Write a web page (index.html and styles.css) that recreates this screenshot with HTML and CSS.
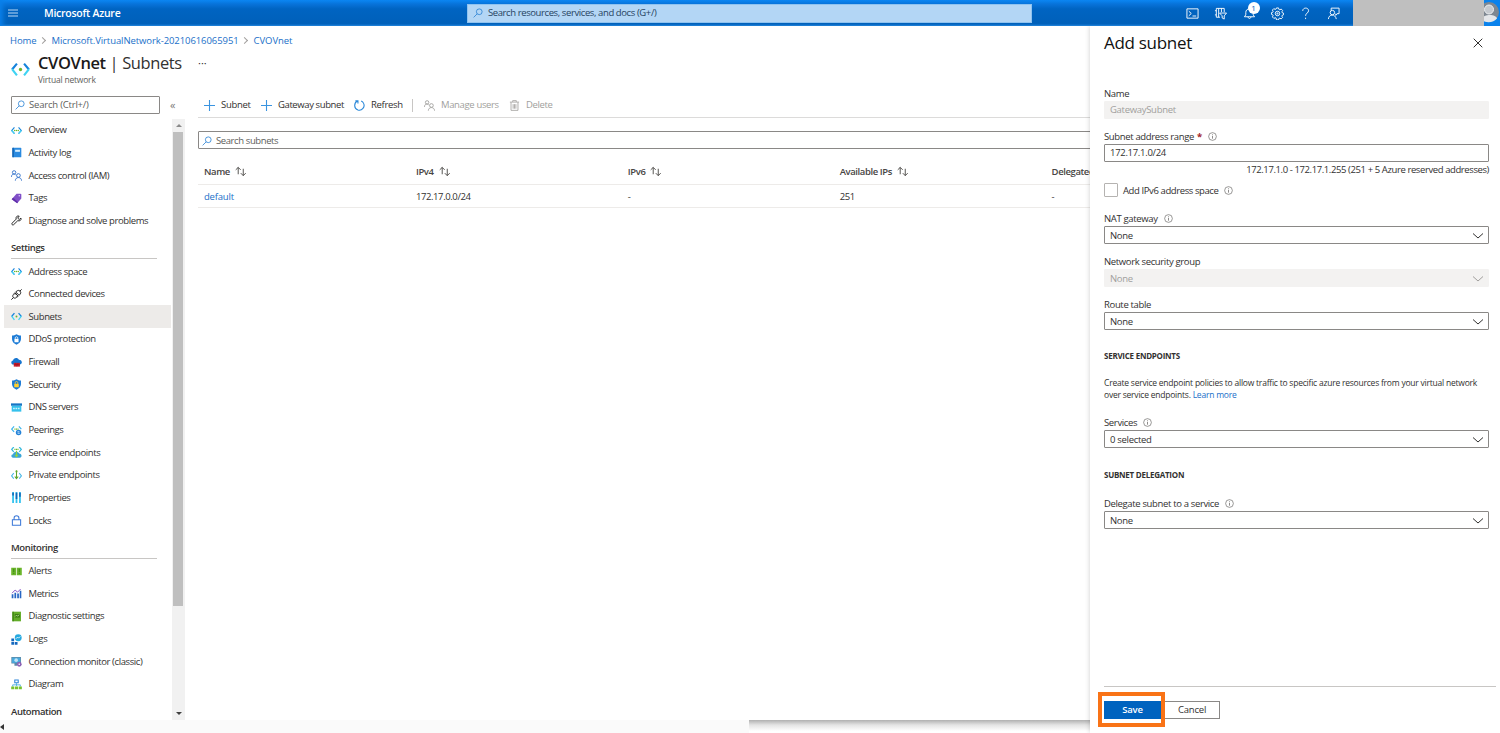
FILE: index.html
```
<!DOCTYPE html>
<html lang="en">
<head>
  <title>CVOVnet | Subnets - Microsoft Azure</title>
  <meta charset="utf-8">
  <meta name="viewport" content="width=device-width, initial-scale=1">
  <link rel="stylesheet" href="styles.css">
</head>
<body>
  <!-- shared icons -->
  <svg class="defs" width="0" height="0">
    <symbol id="vnet" viewBox="0 0 16 16">
      <path d="M5 3.5 1 8l4 4.5" fill="none" stroke="#1b87dd" stroke-width="1.7"/>
      <path d="M11 3.5 15 8l-4 4.5" fill="none" stroke="#1b87dd" stroke-width="1.7"/>
      <path d="M1 8l4 4.5M15 8l-4 4.5" fill="none" stroke="#3fd3f2" stroke-width="1.7"/>
      <g fill="#6cb52d"><circle cx="5.4" cy="8" r="1.1"/><circle cx="8" cy="8" r="1.1"/><circle cx="10.6" cy="8" r="1.1"/></g>
    </symbol>
    <symbol id="subnet" viewBox="0 0 16 16">
      <path d="M5 3 .9 8M11 3l4.1 5" fill="none" stroke="#1583dc" stroke-width="1.8"/>
      <path d="M.9 7.6 5 13M15.1 7.6 11 13" fill="none" stroke="#3fd3f2" stroke-width="1.8"/>
      <circle cx="8" cy="8" r="1.4" fill="#6cb52d"/>
    </symbol>
    <symbol id="search" viewBox="0 0 16 16">
      <g fill="none" stroke="currentColor" stroke-width="1.3"><circle cx="10" cy="6" r="4.6"/><path d="M6.7 9.3 1 15"/></g>
    </symbol>
    <symbol id="people" viewBox="0 0 16 16">
      <g fill="none" stroke="currentColor" stroke-width="1.3"><circle cx="4.5" cy="3.5" r="2.5"/><path d="M.7 10c0-5 5-5 6.3-2.5"/><circle cx="10.8" cy="8" r="2.7"/><path d="M6.3 15.5c0-6 9-6 9 0"/></g>
    </symbol>
    <symbol id="plus" viewBox="0 0 11 11"><path d="M5.500 0v11M0 5.500h11" stroke="#3a94e0" stroke-width="1.100"/></symbol>
    <symbol id="sort" viewBox="0 0 14 12">
      <g fill="none" stroke="#484644" stroke-width="1"><path d="M4.5 9V1.500M1.800 4.200l2.700-2.700 2.700 2.700M10 3v7.500M7.300 7.800l2.700 2.700 2.700-2.700"/></g>
    </symbol>
    <symbol id="info" viewBox="0 0 10 10">
      <circle cx="5" cy="5" r="4.3" fill="none" stroke="#605e5c" stroke-width=".7"/><path d="M5 4.4v3M5 2.6v1" stroke="#605e5c" stroke-width=".8"/>
    </symbol>
    <symbol id="chevron" viewBox="0 0 12 8"><path d="M1 1.500l5 4.500 5-4.500" fill="none" stroke="currentColor" stroke-width="1"/></symbol>
    <symbol id="shield" viewBox="0 0 16 16"><path d="M8 .5c2 1.300 4 1.800 6.500 1.800v5.200c0 4-3.500 6.500-6.500 8-3-1.500-6.500-4-6.500-8V2.300C4 2.300 6 1.800 8 .5z" fill="#1b7bd6"/></symbol>
  </svg>

  <header class="topbar">
    <svg class="burger" viewBox="0 0 10 8"><path d="M0 1h10M0 4h10M0 7h10" stroke="#cfe5fa" stroke-width=".9"/></svg>
    <span class="brand">Microsoft Azure</span>
    <div class="global-search"><svg class="ico-search"><use href="#search"/></svg><span>Search resources, services, and docs (G+/)</span></div>
    <div class="top-icons">
      <svg viewBox="0 0 14 14"><path d="M1 2h12v10H1zM3 4.500 5.700 7 3 9.500M7 9.700h4"/></svg>
      <svg viewBox="0 0 14 14"><path d="M6.500 11H2.500V1.500h8.500v4M5 1.500v9.500M2.500 4h-1.500M2.500 8.500h-1.500M8 1.500v4M6 6.500h7.500L11 9.500v3.500l-2.200-1.200V9.500z"/></svg>
      <span class="bell"><svg viewBox="0 0 14 14"><path d="M1.500 10.500h11L11 8.500V6C11 3.500 9.500 2 7 2S3 3.500 3 6v2.500zM5.500 10.500c0 2.500 3 2.500 3 0"/></svg><b class="badge">1</b></span>
      <svg viewBox="0 0 14 14"><path d="M5.900 1h2.200l.4 1.600 1 .4 1.500-.8 1.500 1.600-.8 1.400.4 1 1.400.4v1.800l-1.400.5-.4 1 .8 1.400-1.600 1.500-1.400-.8-1 .4-.4 1.500H5.900L5.500 11.900l-1-.4-1.400.8-1.600-1.600.8-1.300-.4-1-1.400-.5V6.100l1.400-.4.4-1-.8-1.400L3 1.800l1.500.8 1-.4z"/><circle cx="7" cy="7" r="2.400"/><circle cx="7" cy="7" r=".6"/></svg>
      <svg viewBox="0 0 14 14"><path d="M4 4.200C4 .2 10.300.2 10.300 4c0 2.300-3.200 2.700-3.200 5.500M7.100 11.500v1.500"/></svg>
      <svg viewBox="0 0 14 14"><path d="M4.500 4V1.200h8.500v6h-2.200L9.500 9V7.200"/><circle cx="5.800" cy="6" r="2.400"/><path d="M1.500 13c.3-5.500 7.500-6 8.500 0"/></svg>
    </div>
    <div class="account">
      <svg class="avatar" viewBox="0 0 18 22"><circle cx="7" cy="11" r="10" fill="#7e8791"/><circle cx="7" cy="8.500" r="4.500" fill="#c5c9ce" stroke="#eef0f2"/><path d="M0 19c-1-6 14-7 15-1.500-3 3.500-10 5.500-15 1.500z" fill="#e4e6e9"/></svg>
      <div class="account-cover"></div>
    </div>
  </header>

  <div class="page">
    <main class="blade">
      <nav class="crumbs">
        <a>Home</a><i></i><a>Microsoft.VirtualNetwork-20210616065951</a><i></i><a>CVOVnet</a>
      </nav>
      <div class="blade-head">
        <svg class="head-icon"><use href="#subnet"/></svg>
        <div>
          <h1><b>CVOVnet</b> | <span>Subnets</span></h1>
          <p>Virtual network</p>
        </div>
        <span class="more">···</span>
      </div>

      <div class="columns">
        <aside class="sidebar">
          <div class="side-search">
            <div class="search-box"><svg class="ico-search"><use href="#search"/></svg><span>Search (Ctrl+/)</span></div>
            <span class="collapse">«</span>
          </div>
          <div class="side-scroll">
            <div class="menu">
              <ul>
                <li><svg><use href="#vnet"/></svg>Overview</li>
                <li><svg viewBox="0 0 16 16"><rect x="2" y="1" width="13" height="14" rx="1" fill="#2b8be0"/><path d="M2 1h2v14H2z" fill="#0f5fae"/><path d="M6 4h7v3H6z" fill="#d8efff"/></svg>Activity log</li>
                <li><svg class="blue"><use href="#people"/></svg>Access control (IAM)</li>
                <li><svg viewBox="0 0 16 16"><path d="M8 1h6l1 1v6l-6 7-8-6z" fill="#8150c8"/><path d="M1 9l8 6 1-2-7-6z" fill="#5f2fa8"/><circle cx="12" cy="4" r="1" fill="#e8daff"/></svg>Tags</li>
                <li><svg viewBox="0 0 16 16"><path d="M14.5 4.500 12 6.500 9.700 4.500l2.200-2.800C9 .5 6.500 3 7.500 6L1.500 12c-1 1.500.8 3.300 2.200 2.200L9.800 8.300c3 1 5.700-1 4.700-3.800z" fill="none" stroke="#222" stroke-width="1.4"/></svg>Diagnose and solve problems</li>
              </ul>
              <h2>Settings</h2>
              <ul>
                <li><svg><use href="#vnet"/></svg>Address space</li>
                <li><svg viewBox="0 0 16 16"><g fill="none" stroke="#222" stroke-width="1.400"><path d="M.5 15.500l3-3M12.500 3.500l3-3M5.500 5.500l5 5M5.500 5.500l-2 2.500c-1.500 2-1 3.500 0 4.500s2.800 1.300 4.500-.3l2.500-1.700M6.800 4.200l5 5M6.800 4.200 9 2.700c1.500-1.200 3.200-.7 4.200.3s1.500 2.500.3 4.200l-1.700 2M5.500 8.300l2-2M8 10.800l2-2"/></g></svg>Connected devices</li>
                <li class="active"><svg><use href="#subnet"/></svg>Subnets</li>
                <li><svg viewBox="0 0 16 16"><use href="#shield"/><path d="M5 7h6v5H5z" fill="#fff"/><path d="M6.200 7V5.500c0-2 3.600-2 3.600 0V7" fill="none" stroke="#fff" stroke-width="1.200"/></svg>DDoS protection</li>
                <li><svg viewBox="0 0 16 16"><path d="M3.500 11C-.5 10.500-.5 5.500 3 5c.5-4.500 7-5 8.500-1C16.500 4 17.500 10.500 12.500 11z" fill="#1675d0"/><path d="M4 8.500h9V14H4z" fill="#c8202f"/><path d="M4 11h9M7 8.500V11M10 8.500V11M8.500 11v3" stroke="#8d0d18" stroke-width=".6"/></svg>Firewall</li>
                <li><svg viewBox="0 0 16 16"><use href="#shield"/><path d="M4.700 7h6.600v5H4.700z" fill="#ffd02e"/><path d="M6.200 7V5.300c0-2.200 3.600-2.200 3.600 0V7" fill="none" stroke="#ffd02e" stroke-width="1.300"/></svg>Security</li>
                <li><svg viewBox="0 0 16 16"><path d="M0 2h16v3.500H0z" fill="#1575c5"/><path d="M1 5.500h14v8.500H1z" fill="#35c1ec"/><path d="M3 9.500h10" stroke="#c9f3ff" stroke-width="2" stroke-dasharray="2.500 1"/></svg>DNS servers</li>
                <li><svg viewBox="0 0 16 16"><path d="M4.500 2 1 6l3.500 4M11.500 2 15 6" fill="none" stroke="#3bb4ec" stroke-width="1.700"/><path d="M5 6h6" stroke="#6cb52d" stroke-width="1.800" stroke-dasharray="1.500 .7"/><circle cx="11" cy="11" r="4" fill="#2583d8"/><path d="M9 10h3l-1-1M13 12h-3l1 1" fill="none" stroke="#fff" stroke-width=".8"/></svg>Peerings</li>
                <li><svg viewBox="0 0 16 16"><path d="M4 0 1 3.500l3 3.500M12 0l3 3.500-3 3.500" fill="none" stroke="#34b9dd" stroke-width="1.800"/><path d="M5 3.500h6" stroke="#6cb52d" stroke-width="1.700" stroke-dasharray="1.500 .7"/><path d="M3 15.500c-3.500-.5-3-5 0-5 .5-4.500 7-5 9-1 4 0 4.500 5.500 1 6z" fill="#3aa5d8"/><path d="M8 5.500v8M6 11.500l2 2.500 2-2.500" fill="none" stroke="#8fd13f" stroke-width="1.600"/></svg>Service endpoints</li>
                <li><svg viewBox="0 0 16 16"><path d="M4 4.500.8 8.500l3.200 4M12 4.500l3.200 4-3.200 4" fill="none" stroke="#46b6e6" stroke-width="1.500"/><path d="M8 1v11M5.500 9.500 8 12.500l2.500-3" fill="none" stroke="#5ea52a" stroke-width="1.500"/><circle cx="8" cy="2" r="1.500" fill="#5ea52a"/></svg>Private endpoints</li>
                <li><svg viewBox="0 0 16 16"><path d="M3 0v16M8 0v16M13 0v16" stroke="#32c2ef" stroke-width="2.600"/><path d="M3 1v4M8 1v9M13 1v6" stroke="#1667b8" stroke-width="2.400"/></svg>Properties</li>
                <li><svg viewBox="0 0 16 16"><path d="M2 7h12v8H2zM4.500 7V4.500c0-4.500 7-4.500 7 0V7" fill="none" stroke="#3b78d8" stroke-width="1.500"/></svg>Locks</li>
              </ul>
              <h2>Monitoring</h2>
              <ul>
                <li><svg viewBox="0 0 16 16"><path d="M.3 2.500h7.200v11H.3zM8.500 2.500h7.200v11H8.500z" fill="#6bb52b"/><path d="M4 4v5M12 4v5M4 10.300v1.200M12 10.300v1.200" stroke="#3f8a17" stroke-width="1.600"/></svg>Alerts</li>
                <li><svg viewBox="0 0 16 16"><path d="M1 15V9h2.500v6M5 15V7h2.500v8M9 15V8h2.500v7M12.700 15V4H15v11" fill="#2766c4"/><path d="M1.500 7.500 6 3l3.500 3L14 1.500" fill="none" stroke="#8250c8" stroke-width="1.400"/></svg>Metrics</li>
                <li><svg viewBox="0 0 16 16"><path d="M2 1h12.500v14H2z" fill="#63ad28"/><path d="M2 1h2v14H2z" fill="#3d850f"/><path d="M5.500 4.500H13v5H5.500z" fill="#397c10"/><path d="M6 8l2-2 1.500 1.500L12 5.500" fill="none" stroke="#d8f5b8"/></svg>Diagnostic settings</li>
                <li><svg viewBox="0 0 16 16"><circle cx="10.500" cy="5.500" r="5" fill="#26a9e0"/><path d="M7 7l2.500-2.500 1.500 1.500 2.500-2.500" fill="none" stroke="#fff" stroke-width="1.200"/><path d="M.5 6.500h4v4h-4zM.5 11.500h4v4h-4zM5.500 11.500h4v4h-4z" fill="#1467bd"/></svg>Logs</li>
                <li><svg viewBox="0 0 16 16"><path d="M.5 1.500h14V11H.5zM5 11h4v3H5z" fill="#5d89a8"/><path d="M1.500 2.500h12V10h-12z" fill="#49a9dc"/><circle cx="7.500" cy="6" r="2.600" fill="#bfe3f7"/><circle cx="12" cy="12" r="3.500" fill="#8b62b5"/><circle cx="12" cy="12" r="1.200" fill="#fff"/></svg>Connection monitor (classic)</li>
                <li><svg viewBox="0 0 16 16"><path d="M5.500 1.500h5v4h-5z" fill="#fff" stroke="#2e86d8" stroke-width="1.500"/><path d="M8 6v4M2.500 11V8.500h11V11" fill="none" stroke="#47a8df" stroke-width="1.300"/><path d="M.3 11h4.500v4H.3zM5.800 11h4.500v4H5.800zM11.300 11h4.500v4h-4.500z" fill="#78c22e"/></svg>Diagram</li>
              </ul>
              <h2 class="last">Automation</h2>
            </div>
            <div class="vbar"><i class="up"></i><div class="thumb"></div><i class="down"></i></div>
          </div>
        </aside>

        <section class="content">
          <div class="toolbar">
            <span class="cmd c1"><svg><use href="#plus"/></svg>Subnet</span>
            <span class="cmd c2"><svg><use href="#plus"/></svg>Gateway subnet</span>
            <span class="cmd c3"><svg viewBox="0 0 12 12"><path d="M4 1.200C-.5 3-.2 9.500 4.300 10.900c4.500 1.200 8-3.300 6.200-7.200C9.900 2.300 9 1.500 7.800 1.100M4.300 3.800V1H1.500" fill="none" stroke="#2b88d8" stroke-width="1.200"/></svg>Refresh</span>
            <span class="divider"></span>
            <span class="cmd off c4"><svg><use href="#people"/></svg>Manage users</span>
            <span class="cmd off c5"><svg viewBox="0 0 12 12"><path d="M1 2.300h10M4 2V.7h4V2M2.200 2.500v8.800h7.600V2.500M4.500 4.500v5M6 4.500v5M7.500 4.500v5" fill="none" stroke="currentColor" stroke-width=".9"/></svg>Delete</span>
          </div>
          <div class="search-box wide"><svg class="ico-search"><use href="#search"/></svg><span>Search subnets</span></div>
          <div class="grid-row grid-head">
            <span>Name <svg><use href="#sort"/></svg></span>
            <span>IPv4 <svg><use href="#sort"/></svg></span>
            <span>IPv6 <svg><use href="#sort"/></svg></span>
            <span>Available IPs <svg><use href="#sort"/></svg></span>
            <span>Delegated</span>
          </div>
          <div class="grid-row">
            <span class="name"><a>default</a></span>
            <span>172.17.0.0/24</span>
            <span>-</span>
            <span>251</span>
            <span>-</span>
          </div>
        </section>
      </div>
      <div class="hbar"><i></i><div class="hthumb"></div></div>
    </main>

    <!-- add subnet panel -->
    <aside class="panel">
      <div class="panel-head">
        <h2>Add subnet</h2>
        <svg viewBox="0 0 10 10"><path d="M.7.7l8.600 8.600M9.300.7.7 9.300" stroke="#323130" stroke-width="1"/></svg>
      </div>
      <div class="form">
        <div class="field">
          <label>Name</label>
          <div class="input off">GatewaySubnet</div>
        </div>
        <div class="field range">
          <label>Subnet address range <em>*</em><svg><use href="#info"/></svg></label>
          <div class="input">172.17.1.0/24</div>
          <p class="hint">172.17.1.0 - 172.17.1.255 (251 + 5 Azure reserved addresses)</p>
        </div>
        <div class="check"><span class="box"></span>Add IPv6 address space<svg><use href="#info"/></svg></div>
        <div class="field">
          <label>NAT gateway<svg><use href="#info"/></svg></label>
          <div class="input select">None<svg><use href="#chevron"/></svg></div>
        </div>
        <div class="field">
          <label>Network security group</label>
          <div class="input select off">None<svg><use href="#chevron"/></svg></div>
        </div>
        <div class="field">
          <label>Route table</label>
          <div class="input select">None<svg><use href="#chevron"/></svg></div>
        </div>
        <h3>SERVICE ENDPOINTS</h3>
        <p class="text">Create service endpoint policies to allow traffic to specific azure resources from your virtual network<br>over service endpoints. <a>Learn more</a></p>
        <div class="field">
          <label>Services<svg><use href="#info"/></svg></label>
          <div class="input select">0 selected<svg><use href="#chevron"/></svg></div>
        </div>
        <h3 class="h3-delegation">SUBNET DELEGATION</h3>
        <div class="field">
          <label>Delegate subnet to a service<svg><use href="#info"/></svg></label>
          <div class="input select">None<svg><use href="#chevron"/></svg></div>
        </div>
      </div>
      <footer class="panel-foot">
        <div class="highlight"><button class="save">Save</button></div>
        <button class="cancel">Cancel</button>
      </footer>
    </aside>
  </div>
</body>
</html>
```
FILE: styles.css
```
* {
  box-sizing: border-box;
}
body {
  margin: 0;
  width: 1500px;
  height: 733px;
  overflow: hidden;
  background: #fff;
  color: #323130;
  font-family: "Open Sans", "Noto Sans", sans-serif;
  font-size: 9.5px;
  letter-spacing: -0.4px;
  line-height: 12px;
  white-space: nowrap;
}
h1, h2, h3, p, ul {
  margin: 0;
  padding: 0;
  font-weight: normal;
}
ul {
  list-style: none;
}
svg {
  flex: none;
}
a {
  color: #1a6fc9;
}
.defs {
  position: absolute;
}

/* top bar */
.topbar {
  display: flex;
  align-items: center;
  height: 26px;
  background: linear-gradient(#0c87f4 0, #0873da 4px, #0064c2 9px, #0060b9 24px, #2b86d8 26px);
  box-shadow: inset 5px 0 5px -2px #0a80ea;
  color: #fff;
}
.burger {
  width: 10px;
  height: 8px;
  margin-left: 8px;
}
.brand {
  width: 423px;
  margin-left: 26px;
  font-size: 10.5px;
  font-weight: 600;
  letter-spacing: -0.25px;
}
.global-search {
  display: flex;
  align-items: center;
  width: 565px;
  height: 19px;
  padding-left: 5px;
  background: #b3d6f5;
  border: 1px solid #8fc3f0;
  color: #26435f;
}
.ico-search {
  width: 10px;
  height: 10px;
  margin-right: 5px;
  color: #2b82d4;
}
.top-icons {
  display: flex;
  align-items: center;
  width: 167px;
  margin-left: 154px;
  gap: 15.3px;
}
.top-icons svg {
  display: block;
  width: 13px;
  height: 13px;
  fill: none;
  stroke: #fff;
  stroke-width: 1;
}
.bell {
  position: relative;
}
.badge {
  position: absolute;
  left: 5px;
  top: -5px;
  width: 12px;
  height: 12px;
  border-radius: 6px;
  background: #fff;
  color: #0060b9;
  font-size: 8px;
  font-weight: normal;
  letter-spacing: 0;
  line-height: 12px;
  text-align: center;
}
.account {
  position: relative;
  width: 147px;
  height: 26px;
  background: #0a82ec;
}
.avatar {
  position: absolute;
  right: 0;
  top: 1px;
  width: 18px;
  height: 22px;
}
.account-cover {
  position: absolute;
  left: 0;
  top: 0;
  width: 131px;
  height: 29px;
  background: #bfbfbf;
}

.page {
  display: flex;
  height: 707px;
}
.blade {
  width: 1090px;
  overflow: hidden;
}
.crumbs {
  display: flex;
  align-items: center;
  height: 29px;
  padding-left: 10px;
  letter-spacing: -0.08px;
}
.crumbs i {
  width: 5px;
  height: 5px;
  margin: 0 7px 0 3px;
  border: solid #a19f9d;
  border-width: 1px 1px 0 0;
  transform: rotate(45deg);
}
.blade-head {
  display: flex;
  height: 38px;
  padding-left: 11px;
}
.head-icon {
  width: 19px;
  height: 19px;
  margin: 5px 8px 0 0;
}
.blade-head h1 {
  width: 143px;
  font-size: 16.5px;
  line-height: 15px;
  letter-spacing: -0.4px;
}
.blade-head h1 b {
  font-weight: 600;
  color: #1b1a19;
}
.blade-head p {
  margin-top: 4px;
  font-size: 8.5px;
  letter-spacing: -0.2px;
  color: #605e5c;
}
.more {
  margin: 2px 0 0 17px;
  font-size: 11px;
  letter-spacing: 0;
}
.columns {
  display: flex;
  height: 627px;
}

/* left menu */
.sidebar {
  width: 185px;
}
.side-search {
  display: flex;
  align-items: center;
  height: 26px;
  padding-left: 11px;
}
.search-box {
  display: flex;
  align-items: center;
  width: 149px;
  height: 18px;
  margin-top: -3px;
  padding-left: 3px;
  border: 1px solid #8a8886;
  border-radius: 1px;
  color: #605e5c;
}
.search-box .ico-search {
  margin-right: 4px;
}
.side-search .search-box {
  letter-spacing: -0.2px;
}
.collapse {
  margin: -3px 0 0 10px;
  font-size: 11px;
  color: #797775;
}
.side-scroll {
  display: flex;
  height: 601px;
}
.menu {
  width: 172px;
  overflow: hidden;
}
.menu li {
  display: flex;
  align-items: center;
  height: 22.65px;
  margin: 0 1px 0 4px;
  padding-left: 7px;
}
.menu li svg {
  width: 11px;
  height: 11px;
  margin-right: 6.5px;
}
.menu li.active {
  background: #edebe9;
}
.blue {
  color: #2f6fc9;
}
.menu h2 {
  width: 146px;
  height: 22px;
  margin: 5px 0 1px 11px;
  padding-top: 5px;
  border-bottom: 1px solid #c8c6c4;
  font-size: 9.5px;
  font-weight: 600;
}
.menu h2.last {
  border: 0;
}
.vbar {
  display: flex;
  flex-direction: column;
  align-items: center;
  justify-content: space-between;
  width: 13px;
  background: #f1f1f1;
}
.vbar i {
  margin: 5px 0;
  border: 3px solid transparent;
}
.vbar .up {
  border-top: 0;
  border-bottom-color: #8a8a8a;
}
.vbar .down {
  border-bottom: 0;
  border-top-color: #404040;
}
.thumb {
  width: 10px;
  height: 474px;
  margin: 0 auto auto 1px;
  background: #bfbfbf;
}

/* subnets list */
.content {
  width: 892px;
  margin-left: 13px;
}
.toolbar {
  display: flex;
  align-items: center;
  height: 25px;
  padding-left: 6px;
  border-bottom: 1px solid #dcdbda;
}
.cmd {
  display: flex;
  align-items: center;
}
.cmd svg {
  width: 11px;
  height: 11px;
  margin-right: 6px;
}
.c1 {
  width: 57px;
  letter-spacing: -0.3px;
}
.c2 {
  width: 93px;
}
.c3 {
  width: 58px;
  letter-spacing: -0.3px;
}
.off {
  color: #a19f9d;
}
.divider {
  width: 1px;
  height: 13px;
  margin-right: 11px;
  background: #c8c6c4;
}
.c4 {
  width: 85px;
}
.c4,
.c5 {
  letter-spacing: -0.35px;
}
.wide {
  width: 900px;
  margin-top: 13px;
  padding-top: 1px;
}
.grid-row {
  display: grid;
  grid-template-columns: repeat(5, 211.9px);
  align-items: center;
  height: 23px;
  padding: 1px 0 0 6px;
  border-bottom: 1px solid #edebe9;
}
.name {
  padding-top: 1px;
  letter-spacing: -0.2px;
}
.grid-head {
  height: 36px;
  padding-top: 10px;
  font-weight: 600;
  color: #484644;
}
.grid-head span {
  display: flex;
  align-items: center;
}
.grid-head svg {
  width: 13px;
  height: 11px;
  margin-left: 4px;
}

/* bottom scrollbar */
.hbar {
  display: flex;
  height: 13px;
  background: #fafafa;
}
.hbar i {
  width: 0;
  height: 6px;
  margin: 4px 745px 0 0;
  border: 3px solid transparent;
  border-left: 0;
  border-right: 4px solid #333;
}
.hthumb {
  flex: 1;
  background: linear-gradient(#b0b0b0, #e4e4e4 5px, #fff 11px);
}

/* right panel */
.panel {
  display: flex;
  flex-direction: column;
  width: 410px;
  padding-left: 14px;
  background: #fff;
  box-shadow: 0 0 5px rgba(0, 0, 0, .2);
  clip-path: inset(0 0 0 -10px);
}
.panel-head {
  display: flex;
  align-items: center;
  justify-content: space-between;
  height: 34px;
  padding: 0 17px 0 0;
}
.panel-head h2 {
  font-size: 17px;
  font-weight: 500;
  letter-spacing: -0.3px;
  color: #111;
}
.panel-head svg {
  width: 10px;
  height: 10px;
}
.form {
  width: 385px;
  height: 626px;
  padding-top: 25px;
}
.field {
  height: 34px;
  margin-bottom: 9px;
}
.range {
  margin-bottom: 20px;
}
.field label {
  display: flex;
  align-items: center;
  height: 16px;
  padding-top: 1px;
  letter-spacing: -0.35px;
}
.field em {
  margin-left: 3px;
  color: #a4262c;
  font-style: normal;
  font-weight: bold;
}
.form label svg,
.check svg {
  width: 9px;
  height: 9px;
  margin-left: 6px;
}
.input {
  display: flex;
  align-items: center;
  justify-content: space-between;
  height: 18px;
  padding: 0 4px 0 5px;
  border: 1px solid #8a8886;
  border-radius: 1px;
  letter-spacing: -0.3px;
}
.select {
  padding-top: 1px;
}
.input.off {
  background: #f3f2f1;
  border-color: #f3f2f1;
}
.input svg {
  width: 12px;
  height: 8px;
}
.hint {
  line-height: 15px;
  text-align: right;
}
.check {
  display: flex;
  align-items: center;
  height: 16px;
  margin-bottom: 12px;
  padding-top: 1px;
}
.box {
  width: 14px;
  height: 14px;
  margin: -1px 5px 0 0;
  border: 1px solid #b5b3b1;
  border-radius: 1px;
}
.form h3 {
  height: 16px;
  margin: 18px 0 13px;
  font-size: 8px;
  font-weight: bold;
  line-height: 16px;
  letter-spacing: -0.25px;
}
.form h3.h3-delegation {
  margin: 19px 0 12px;
}
.text {
  height: 24px;
  margin-bottom: 13px;
  font-size: 8.5px;
  letter-spacing: -0.22px;
}
.panel-foot {
  display: flex;
  width: 392px;
  height: 47px;
  padding-top: 5px;
  border-top: 1px solid #c8c6c4;
}
.highlight {
  width: 67px;
  height: 35px;
  margin-left: -6px;
  padding: 5px 0 0 2px;
  border: 4px solid #f97316;
}
button {
  display: block;
  width: 57px;
  height: 18px;
  padding: 0;
  border: 0;
  font: inherit;
  letter-spacing: -0.2px;
}
.save {
  background: #0063bf;
  color: #fff;
  font-weight: 600;
}
.cancel {
  width: 55px;
  margin-top: 9px;
  border: 1px solid #8a8886;
  border-left: 0;
  background: #fff;
  color: #323130;
}
```
